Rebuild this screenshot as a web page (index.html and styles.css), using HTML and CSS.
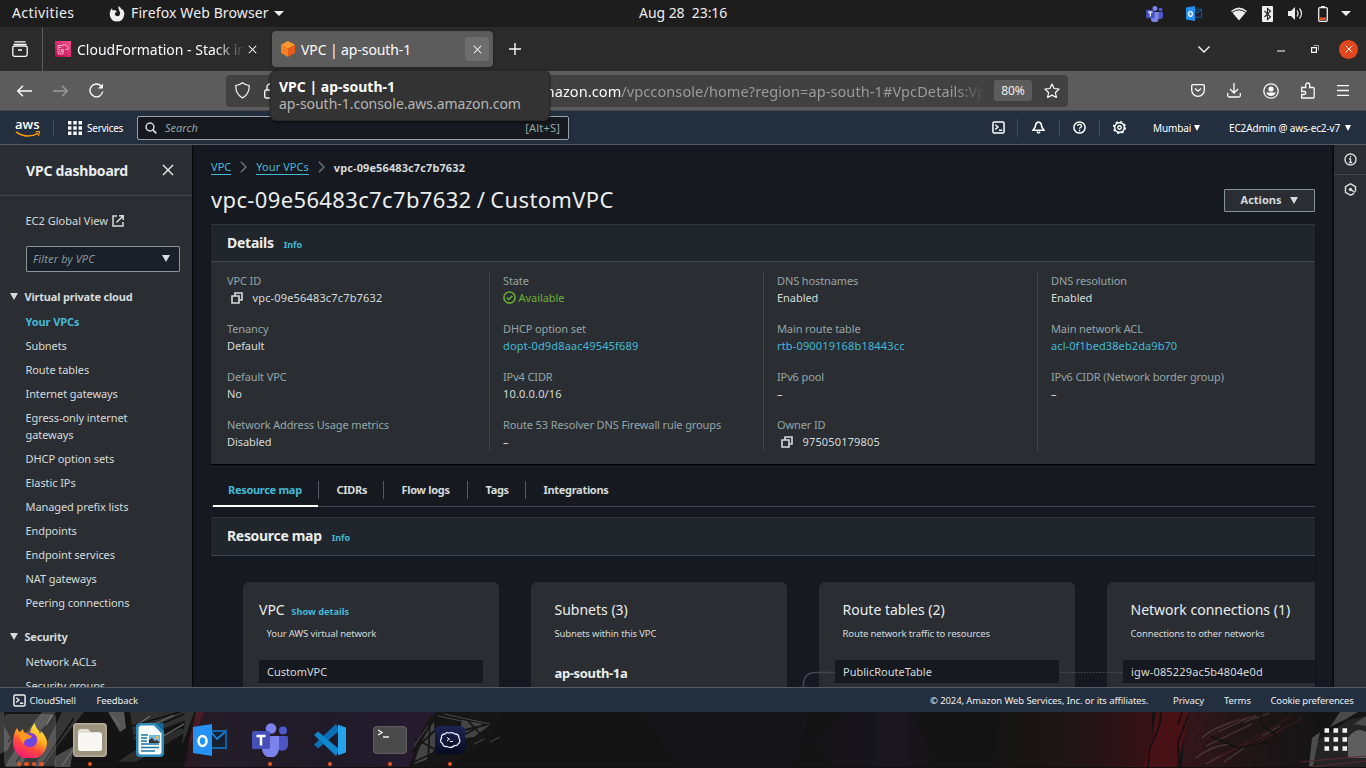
FILE: index.html
```html
<!DOCTYPE html>
<html lang="en">
<head>
<meta charset="utf-8">
<title>VPC | ap-south-1</title>
<link rel="stylesheet" href="styles.css">
</head>
<body>
<svg width="0" height="0" class="defs">
  <defs>
    <symbol id="teams" viewBox="0 0 36 34">
      <circle cx="31" cy="7.5" r="4" fill="#5059c9"/><path d="M25 13h9.500q1.500 0 1.500 1.500V22a6 6 0 0 1-9 5z" fill="#4e56c4"/>
      <circle cx="19" cy="5.500" r="5.300" fill="#7b83eb"/><path d="M10 13h17v13a8.500 8.500 0 0 1-17 0z" fill="#7b83eb"/>
      <rect x="0" y="8" width="18" height="18" rx="1.600" fill="#464eb8"/><path d="M4.500 13h9M9 13v9.500" stroke="#fff" stroke-width="2.500"/>
    </symbol>
    <symbol id="outlook" viewBox="0 0 34 32">
      <path d="M17 7h16v17H17z" fill="#17202e" stroke="#1464ac" stroke-width="1.800"/><path d="M18 8l6 7 8-7" fill="none" stroke="#1683dc" stroke-width="1.800"/>
      <path d="M0 3l19-3v32L0 29z" fill="#2492f4"/><ellipse cx="9.500" cy="17" rx="4" ry="5" fill="none" stroke="#fff" stroke-width="2.600"/>
    </symbol>
    <symbol id="copy" viewBox="0 0 12 12"><path d="M1 4h7v7H1z M4 4V1h7v7H8" fill="none" stroke="#d5dbdb" stroke-width="1.600"/></symbol>
    <symbol id="shell" viewBox="0 0 14 14"><rect x="1" y="1" width="12" height="12" rx="1.500" fill="none" stroke="currentColor" stroke-width="1.600"/><path d="M3.500 4l3 2.500-3 2.500M7.500 10h3.500" fill="none" stroke="currentColor" stroke-width="1.500"/></symbol>
    <symbol id="cross" viewBox="0 0 12 12"><path d="M1 1l10 10M11 1L1 11" fill="none" stroke="currentColor" stroke-width="1.400"/></symbol>
  </defs>
</svg>

<div class="topbar">
  <span class="activities">Activities</span>
  <svg class="ff-mono" width="16" height="16" viewBox="0 0 16 16"><path d="M3 2l.5 2.500Q5 3.500 6.500 4.500L8 5.500 6.500 6.500Q5 8 6.500 9.500 8.500 11 10.500 9.500 12 7.500 10.500 5 9 3 9.500 0 12 1.500 13 4l.7-1Q16 6.500 15 10A7.200 7.200 0 0 1 1 10Q0 6 3 2z" fill="#eee"/></svg>
  <span class="appname">Firefox Web Browser</span>
  <i class="caret"></i>
  <span class="clock">Aug 28&nbsp; 23:16</span>
  <div class="tray">
    <svg class="t-teams" width="17" height="16"><use href="#teams"/></svg>
    <svg class="t-out" width="16" height="15"><use href="#outlook"/></svg>
    <svg class="t-wifi" width="16" height="14" viewBox="0 0 16 14"><path d="M0 4Q8-3 16 4L8 13.500z" fill="#eee"/><path d="M1 4.300Q8-1 15 4.300" stroke="#1d1d1d" stroke-width="1" fill="none" transform="translate(0 1.200)"/></svg>
    <svg class="t-bt" width="11" height="16" viewBox="0 0 11 16"><rect width="11" height="16" rx="1" fill="#eee"/><path d="M2.500 5l6 6-3 2.500v-11l3 2.500-6 6" fill="none" stroke="#222" stroke-width="1.100"/></svg>
    <svg class="t-vol" width="15" height="13" viewBox="0 0 15 13"><path d="M0 4h3l4-4v13L3 9H0z" fill="#eee"/><path d="M9 3.500q2 3 0 6M11.500 1.500q4 5 0 10" fill="none" stroke="#ddd" stroke-width="1.300"/></svg>
    <svg class="t-bat" width="10" height="16" viewBox="0 0 10 16"><path d="M3 0h4v2H3z" fill="#eee"/><rect x=".7" y="1.700" width="8.600" height="13.600" rx="1" fill="none" stroke="#eee" stroke-width="1.300"/><path d="M2 11.500h6v2.500H2z" fill="#e95420"/></svg>
    <i class="caret"></i>
  </div>
</div>

<div class="tabbar">
  <div class="tabview"><svg width="16" height="16" viewBox="0 0 16 16" fill="none" stroke="#fbfbfe" stroke-width="1.300"><path d="M2.500.8h11M1.500 3.300h13"/><rect x=".8" y="5" width="14.400" height="10.300" rx="1.800"/><path d="M6 9h4" stroke-width="1.500"/></svg></div>
  <div class="tab tab-a">
    <svg width="16" height="16" viewBox="0 0 16 16"><defs><linearGradient id="cf" x1="0" y1="1" x2="1" y2="0"><stop stop-color="#b0084d"/><stop offset="1" stop-color="#ff4f8b"/></linearGradient></defs><path d="M0 0h16v16H0z" fill="url(#cf)"/><path d="M6.500 4.500H3v8.500h5v-2.500M4 6.500h2M4 8.700h1.500M4 11h2M6.500 8.500h1.800v2H6.500zM7 5.500q0-2 2-2t2.500 1.500q2 .3 2 1.800T12 8.500h-1.500" fill="none" stroke="#ffd6e6" stroke-width=".8"/></svg>
    <span class="tab-title fade">CloudFormation - Stack in</span>
    <svg class="x" width="9" height="9"><use href="#cross"/></svg>
  </div>
  <div class="tab tab-b">
    <svg width="14" height="16" viewBox="0 0 14 16"><path d="M7 0l7 3.800-7 3.900-7-3.900z" fill="#fa9a2e"/><path d="M0 3.800l7 3.900V16l-7-4z" fill="#f58220"/><path d="M14 3.800L7 7.700V16l7-4z" fill="#e65c1c"/></svg>
    <span class="tab-title">VPC | ap-south-1</span>
    <span class="xbox"><svg width="9" height="9"><use href="#cross"/></svg></span>
  </div>
  <svg class="plus" width="12" height="12" viewBox="0 0 12 12"><path d="M6 0v12M0 6h12" stroke="#fbfbfe" stroke-width="1.400"/></svg>
  <div class="winctl">
    <svg width="12" height="7" viewBox="0 0 12 7"><path d="M.5.500L6 6l5.500-5.500" fill="none" stroke="#fbfbfe" stroke-width="1.400"/></svg>
    <svg class="w-min" width="8" height="2"><path d="M0 1h8" stroke="#fff"/></svg>
    <svg class="w-max" width="8" height="8" viewBox="0 0 8 8"><path d="M.6 2.600h4.800v4.800H.6z" fill="none" stroke="#fff" stroke-width="1.200"/><path d="M2.500.500h5v5" fill="none" stroke="#aaa"/></svg>
    <span class="w-close"><svg width="8" height="8"><use href="#cross"/></svg></span>
  </div>
</div>

<div class="toolbar">
  <svg class="n-back" width="15" height="12" viewBox="0 0 15 12"><path d="M6 .7L.8 6 6 11.300M1 6h14" fill="none" stroke="#fbfbfe" stroke-width="1.400"/></svg>
  <svg class="n-fwd" width="15" height="12" viewBox="0 0 15 12"><path d="M9 .7L14.200 6 9 11.300M14 6H0" fill="none" stroke="#9b9b9b" stroke-width="1.400"/></svg>
  <svg class="n-rel" width="15" height="15" viewBox="0 0 15 15"><path d="M12 3A6.400 6.400 0 1 0 13.700 8.500" fill="none" stroke="#fbfbfe" stroke-width="1.400"/><path d="M14 .5v5H9z" fill="#fbfbfe"/></svg>
  <div class="urlbar">
    <svg class="u-shield" width="15" height="17" viewBox="0 0 15 17"><path d="M7.500.800Q10 3 14.200 3.500 14.500 12 7.500 16 .5 12 .8 3.500 5 3 7.500.800z" fill="none" stroke="#fbfbfe" stroke-width="1.200"/></svg>
    <svg class="u-lock" width="12" height="16" viewBox="0 0 12 16"><path d="M3 7V4a3 3 0 0 1 6 0v3" fill="none" stroke="#fbfbfe" stroke-width="1.300"/><rect x=".7" y="7" width="10.600" height="8" rx="1.500" fill="none" stroke="#fbfbfe" stroke-width="1.300"/></svg>
    <div class="url"><b>mazon.com</b><span>/vpcconsole/home?region=ap-south-1#VpcDetails:Vp</span></div>
    <span class="zoom">80%</span>
    <svg class="star" width="16" height="16" viewBox="0 0 16 16"><path d="M8 1l2.100 4.500 5 .6-3.700 3.400 1 5L8 12.100l-4.400 2.400 1-5L.9 6.100l5-.6z" fill="none" stroke="#fbfbfe" stroke-width="1.200" stroke-linejoin="round"/></svg>
  </div>
  <div class="exts">
    <svg width="14" height="13" viewBox="0 0 14 13" fill="none" stroke="#fbfbfe" stroke-width="1.300"><path d="M1.800.700h10.400q1.100 0 1.100 1.100V6a6.300 6.300 0 0 1-12.600 0V1.800Q.7.700 1.800.700zM4 4.500L7 7.200l3-2.700"/></svg>
    <svg width="14" height="15" viewBox="0 0 14 15" fill="none" stroke="#fbfbfe" stroke-width="1.300"><path d="M7 0v9.500M3 6l4 4 4-4M.7 10v2.500q0 1.500 1.500 1.500h9.600q1.500 0 1.500-1.500V10"/></svg>
    <svg width="16" height="16" viewBox="0 0 16 16"><circle cx="8" cy="8" r="7.200" fill="none" stroke="#fbfbfe" stroke-width="1.300"/><circle cx="8" cy="6" r="2.600" fill="#fbfbfe"/><path d="M3 9.500h10Q11 13 8 13T3 9.500z" fill="#fbfbfe"/></svg>
    <svg width="14" height="17" viewBox="0 0 14 17" fill="none" stroke="#fbfbfe" stroke-width="1.300"><path d="M.7 16V12.500h2.500q1.500 0 1.500-1.500T3.200 9.500H.7V5.500h4V3a2 2 0 0 1 4 0v2.500h3.500q1 0 1 1v8.500q0 1-1 1z"/></svg>
    <svg width="12" height="11" viewBox="0 0 12 11"><path d="M0 .7h12M0 5.500h12M0 10.300h12" stroke="#fbfbfe" stroke-width="1.300"/></svg>
  </div>
</div>

<div class="awsnav">
  <div class="logo"><span>aws</span><svg width="26" height="7" viewBox="0 0 26 7" fill="none" stroke="#ff9900"><path d="M1 .8Q12 8.500 23 2.300" stroke-width="1.500"/><path d="M20.500 1q4-1 4 0t-1.200 4" stroke-width="1.200"/></svg></div>
  <i class="sep s1"></i>
  <svg class="grid9" width="14" height="14" viewBox="0 0 14 14"><path d="M0 1.700h14M0 7h14M0 12.300h14" stroke="#fff" stroke-width="3.400" stroke-dasharray="3.400 1.900"/></svg>
  <span class="services">Services</span>
  <div class="search"><svg width="12" height="12" viewBox="0 0 12 12"><circle cx="5" cy="5" r="3.900" fill="none" stroke="#d5dbdb" stroke-width="1.500"/><path d="M7.800 7.800L11.300 11.300" stroke="#d5dbdb" stroke-width="1.800"/></svg><em>Search</em><span>[Alt+S]</span></div>
  <div class="navr">
    <svg class="a1" width="13" height="13"><use href="#shell"/></svg><i class="sep"></i>
    <svg class="a2" width="13" height="13" viewBox="0 0 13 13" fill="none" stroke="#fff" stroke-width="1.600"><path d="M6.500 1Q3.800 1.500 3.500 4.500L3 6.500 1 9.300h11L10 6.500l-.5-2Q9.200 1.500 6.500 1zM5 10.500q1.500 3 3 0"/></svg><i class="sep"></i>
    <svg class="a3" width="13" height="13" viewBox="0 0 13 13" fill="none" stroke="#fff" stroke-width="1.500"><circle cx="6.500" cy="6.500" r="5.600"/><path d="M4.500 5q.2-1.600 2-1.600t2 1.600q0 .9-1 1.500t-1 1.200M6.500 8.800v1.400" stroke-width="1.400"/></svg><i class="sep"></i>
    <svg class="a4" width="13" height="13" viewBox="0 0 13 13" fill="none" stroke="#fff"><circle cx="6.500" cy="6.500" r="4.800" stroke-width="1.500"/><circle cx="6.500" cy="6.500" r="5.900" stroke-width="1.300" stroke-dasharray="2.300 2.330"/><circle cx="6.500" cy="6.500" r="1.700" stroke-width="1.400"/></svg>
    <span class="region">Mumbai</span><i class="tri"></i><span class="acct">EC2Admin @ aws-ec2-v7</span><i class="tri"></i>
  </div>
</div>

<div class="page">
  <aside class="side">
    <div class="side-h"><b>VPC dashboard</b><svg width="12" height="12"><use href="#cross"/></svg></div>
    <div class="side-b">
      <div class="global">EC2 Global View <svg width="12" height="12" viewBox="0 0 12 12" fill="none" stroke="#d5dbdb" stroke-width="1.500"><path d="M5 1H1v10h10V7M7 .8h4.200V5M11 1L4.500 7.500"/></svg></div>
      <div class="filter"><em>Filter by VPC</em><i class="tri big"></i></div>
      <div class="sec"><i class="tri big"></i><b>Virtual private cloud</b></div>
      <ul>
        <li class="on">Your VPCs</li><li>Subnets</li><li>Route tables</li><li>Internet gateways</li><li>Egress-only internet<br>gateways</li><li>DHCP option sets</li><li>Elastic IPs</li><li>Managed prefix lists</li><li>Endpoints</li><li>Endpoint services</li><li>NAT gateways</li><li>Peering connections</li>
      </ul>
      <div class="sec two"><i class="tri big"></i><b>Security</b></div>
      <ul><li>Network ACLs</li><li>Security groups</li></ul>
    </div>
  </aside>

  <main class="main">
    <nav class="crumbs"><a class="c1">VPC</a><svg width="7" height="12" viewBox="0 0 7 12"><path d="M.8.800L6 6 .8 11.200" fill="none" stroke="#687078" stroke-width="1.500"/></svg><a class="c2">Your VPCs</a><svg width="7" height="12" viewBox="0 0 7 12"><path d="M.8.800L6 6 .8 11.200" fill="none" stroke="#687078" stroke-width="1.500"/></svg><b>vpc-09e56483c7c7b7632</b></nav>
    <div class="titlerow"><h1>vpc-09e56483c7c7b7632 / CustomVPC</h1><div class="actions"><b>Actions</b><i class="tri big"></i></div></div>
    <section class="panel">
      <header><h2>Details</h2><a>Info</a></header>
      <div class="cols">
        <dl><dt>VPC ID</dt><dd class="cp id"><svg width="12" height="12"><use href="#copy"/></svg>vpc-09e56483c7c7b7632</dd><dt>Tenancy</dt><dd>Default</dd><dt>Default VPC</dt><dd>No</dd><dt>Network Address Usage metrics</dt><dd>Disabled</dd></dl>
        <dl><dt>State</dt><dd class="ok"><svg width="13" height="13" viewBox="0 0 13 13" fill="none" stroke="#6aaf35" stroke-width="1.500"><circle cx="6.500" cy="6.500" r="5.600"/><path d="M3.800 6.500l2 2 3.700-3.700"/></svg>Available</dd><dt>DHCP option set</dt><dd class="lk id">dopt-0d9d8aac49545f689</dd><dt>IPv4 CIDR</dt><dd class="id">10.0.0.0/16</dd><dt>Route 53 Resolver DNS Firewall rule groups</dt><dd>–</dd></dl>
        <dl><dt>DNS hostnames</dt><dd>Enabled</dd><dt>Main route table</dt><dd class="lk id">rtb-090019168b18443cc</dd><dt>IPv6 pool</dt><dd>–</dd><dt>Owner ID</dt><dd class="cp id"><svg width="12" height="12"><use href="#copy"/></svg>975050179805</dd></dl>
        <dl><dt>DNS resolution</dt><dd>Enabled</dd><dt>Main network ACL</dt><dd class="lk id acl">acl-0f1bed38eb2da9b70</dd><dt>IPv6 CIDR (Network border group)</dt><dd>–</dd></dl>
      </div>
    </section>
    <div class="tabs"><b class="on">Resource map</b><b class="t2">CIDRs</b><b class="t3">Flow logs</b><b class="t4">Tags</b><b class="t5">Integrations</b></div>
    <section class="panel map">
      <header><h2>Resource map</h2><a>Info</a></header>
      <div class="cards">
        <div class="card first"><h3>VPC <a>Show details</a></h3><p>Your AWS virtual network</p><div class="res">CustomVPC</div></div>
        <div class="card"><h3>Subnets (3)</h3><p>Subnets within this VPC</p><b class="az">ap-south-1a</b></div>
        <div class="card"><h3>Route tables (2)</h3><p>Route network traffic to resources</p><div class="res">PublicRouteTable</div></div>
        <div class="card"><h3>Network connections (1)</h3><p>Connections to other networks</p><div class="res id">igw-085229ac5b4804e0d</div></div>
        <svg class="wires" width="330" height="110" viewBox="0 0 330 110" fill="none"><path d="M1.500 106V104Q1.500 91.500 14 91.500H33" stroke="#414750" stroke-width="1.600"/><path d="M258 91.500H321" stroke="#4a4f57" stroke-dasharray="1.500 1.500"/></svg>
      </div>
    </section>
  </main>

  <aside class="rail">
    <div><svg width="13" height="13" viewBox="0 0 13 13" fill="none" stroke="#d5dbdb" stroke-width="1.400"><circle cx="6.500" cy="6.500" r="5.500"/><path d="M6.500 3v1.500M5 6h1.500v3.500M4.800 9.500h3.400" stroke-width="1.300"/></svg></div>
    <div><svg width="13" height="13" viewBox="0 0 13 13" fill="none" stroke="#d5dbdb" stroke-width="1.500"><path d="M10 10.500L6.500 12.200 1.500 9.300V3.700L6.500.8l5 2.900V8.500M6.500 6.500l4.500 3"/><circle cx="6.500" cy="6.500" r="1" fill="#d5dbdb"/></svg></div>
  </aside>
</div>

<footer class="foot"><svg width="13" height="13"><use href="#shell"/></svg><span class="f1">CloudShell</span><span class="f2">Feedback</span><span class="f3">© 2024, Amazon Web Services, Inc. or its affiliates.</span><span class="f4">Privacy</span><span class="f5">Terms</span><span class="f6">Cookie preferences</span></footer>

<div class="dock">
  <svg class="wall" width="1366" height="56" viewBox="0 0 1366 56">
    <defs>
      <linearGradient id="pur"><stop stop-color="#2b1820"/><stop offset=".12" stop-color="#241d28"/><stop offset=".6" stop-color="#1f1a28"/><stop offset="1" stop-color="#281b31"/></linearGradient>
      <linearGradient id="red"><stop stop-color="#151414"/><stop offset=".45" stop-color="#1e1416"/><stop offset=".75" stop-color="#2a1216"/><stop offset="1" stop-color="#381015"/></linearGradient>
      <linearGradient id="blu"><stop stop-color="#151416"/><stop offset=".7" stop-color="#191620"/><stop offset="1" stop-color="#151414"/></linearGradient>
      <linearGradient id="str"><stop stop-color="#33151a"/><stop offset=".5" stop-color="#1e1517"/><stop offset="1" stop-color="#141414"/></linearGradient>
    </defs>
    <path d="M0 0h1366v56H0z" fill="#141414"/>
    <g fill="#3d3d3d"><path d="M0 0h4v14l8 14-4 10-8 4z"/><path d="M42 0h14L38 22 20 56H4l18-30z"/><path d="M62 0h22L56 36l-14 20h-8z" fill="#353535"/><path d="M108 0h16l2 16-6 4z" fill="#565656"/><path d="M130 0h60l-4 8-52 20z" fill="#303030"/><path d="M118 50l28-20 36-14 4 4-50 30z" fill="#2c2c2c"/><path d="M56 44l18-10-4 22H54z" fill="#4a4a4a"/><path d="M186 0h8l-12 34z" fill="#333"/></g>
    <g stroke="#6a6a6a" stroke-width="1.300" fill="none"><path d="M46 14L52 3M62 54L74 36M112 4l8 10M150 4l-14 10M174 3l-34 16M184 12l-38 22"/></g>
    <g stroke="#111" stroke-width="1.600" fill="none"><path d="M8 30L34 2M16 50L52 8M44 50l30-44M132 14l48-14M134 24l50-22M120 46l60-34"/></g>
    <path d="M196 0H436L408 56H184z" fill="url(#pur)"/><path d="M196 0h8l-8 22-8 12z" fill="#5b1c2b" opacity=".7"/>
    <path d="M436 0q-18 16-26 56h40l20-16 20-14 12-26z" fill="#161616"/>
    <path d="M434 10q-12 14-20 42l12-4 10-12zM462 8l28 5-16 12-16 2z" fill="#444"/>
    <g stroke="#161616" stroke-width="1.800" fill="none"><path d="M412 40l32-30M414 26l26 14M430 4l-2 52M414 50l30-14M456 20l34-8M456 27l30-16M464 4l18 20"/></g>
    <g stroke="#4a4a4a" fill="none"><path d="M438 4l28 6M444 2l46 10M428 14l-14 20M474 32l10-5M490 30l10-5"/></g>
    <path d="M640 0h170l-16 56H680z" fill="#151419"/><path d="M812 30l34-30h66l26 56h-100z" fill="url(#blu)"/>
    <path d="M1000 0h152v56h-160z" fill="url(#red)"/>
    <path d="M1186 0h124l20 56h-148z" fill="url(#str)"/>
    <path d="M1156 0h32l-3 22-8 34h-34l8-24z" fill="#541015" opacity=".8"/>
    <path d="M1148 56l2-20 10-24 1-12M1188 4l-10 26 1 24M1182 0l-4 12" fill="none" stroke="#180e10" stroke-width="1.600"/>
    <g fill="none" stroke="#45383b" stroke-width="1.300"><path d="M1202 26Q1216 12 1256 4M1206 34l46-22M1196 46q14-12 34-14M1224 50l20-14M1244 10l26-9M1218 20l30-14M1262 24l18-10M1206 52l16-9"/></g>
    <g fill="none" stroke="#431a21"><path d="M1190 28l18-26M1194 40q24-30 60-36M1212 50l80-46M1220 44l50-22M1252 34l50-28"/></g>
    <path d="M1210 24l28 12 30-6M1260 0l2 14 16 10" fill="none" stroke="#111" stroke-width="1.500"/>
    <path d="M1312 56q-4-24 16-34l20-14 18-4v52z" fill="#242424"/><path d="M1348 26q8-12 18-6v26h-18z" fill="#5e5e5e"/><path d="M1312 26l8-6-3 14-4 20h-4z" fill="#4c4c4c"/><path d="M1340 0h18l-12 7-16 8zM1354 12l12-8v10z" fill="#4a4a4a"/>
    <path d="M1300 50l66-6M1310 55l56-6" stroke="#5a2a31"/>
    <path d="M0 55.500h1366" stroke="#111"/>
  </svg>
  <div class="apps">
    <div class="app active"><svg width="36" height="36" viewBox="0 0 36 36"><defs><linearGradient id="fx" x1=".8" y1="0" x2=".3" y2="1"><stop stop-color="#fff04a"/><stop offset=".4" stop-color="#ffae1e"/><stop offset=".65" stop-color="#ff4a3b"/><stop offset="1" stop-color="#f0167d"/></linearGradient><radialGradient id="fp"><stop stop-color="#5150e8"/><stop offset="1" stop-color="#9238d4"/></radialGradient></defs><path d="M5 6q1 3 3 4l3-3q0 3 2 4 3 0 5 2Q18 6 23 1q0 4 4 8l1 3 1-3q6 6 6 12A17 17 0 0 1 1 20Q1 12 5 6z" fill="url(#fx)"/><circle cx="18" cy="18" r="7.300" fill="url(#fp)"/><path d="M6 11q6-3 11 2l3 1q-1 3-5 3-3 1-3 5-4-4-6-11z" fill="#ff961e"/></svg><span class="dots d4"><i></i><i></i><i></i><i></i></span></div>
    <div class="app"><svg width="34" height="34" viewBox="0 0 34 34"><rect x=".8" y=".8" width="32.400" height="32.400" rx="3" fill="#9d947f" stroke="#b6ae9c" stroke-width="1.500"/><path d="M5 9q0-3 3-3h7l3 3h8q3 0 3 3v13q0 3-3 3H8q-3 0-3-3z" fill="#e3dfd7"/><path d="M5 12q0-2 3-2h18q3 0 3 2v13q0 3-3 3H8q-3 0-3-3z" fill="#f8f7f4"/></svg><span class="dots"><i></i></span></div>
    <div class="app"><svg width="28" height="34" viewBox="0 0 28 34"><path d="M4 0h16l8 8v22q0 4-4 4H4q-4 0-4-4V4q0-4 4-4z" fill="#2c89b8"/><path d="M4.500 2.500H18l7.500 8V29q0 2.500-2.500 2.500H5Q2.500 31.500 2.500 29V4.500z" fill="#f9fcfd"/><path d="M20 0h7.500v8z" fill="#14658f"/><path d="M5 12h7M5 15h6M5 18h6M5 21h18M5 24.500h18M5 28h14" stroke="#1975a2" stroke-width="1.500"/><path d="M13 12h11v8H13z" fill="#71b6df"/><path d="M13 20v-3l3-2 3 3 2-1 3 3z" fill="#333"/><circle cx="21" cy="14.500" r="1.500" fill="#f7bd46"/></svg></div>
    <div class="app"><svg width="34" height="32"><use href="#outlook"/></svg></div>
    <div class="app"><svg width="36" height="34"><use href="#teams"/></svg><span class="dots"><i></i></span></div>
    <div class="app"><svg width="32" height="32" viewBox="0 0 32 32"><path d="M0 20.500L22 0l3 7L4 24.500z" fill="#0c6eb5"/><path d="M0 11l4-3.500L25 25l-3 7z" fill="#1186cf"/><path d="M22 0l10 3.500v25L22 32l2-1V1z" fill="#26a3ed"/></svg><span class="dots"><i></i></span></div>
    <div class="app"><svg width="34" height="28" viewBox="0 0 34 28"><rect x=".7" y=".7" width="32.600" height="26.600" rx="2.500" fill="#494949" stroke="#686868"/><path d="M5 4l4 2.500L5 9M10 11h6" fill="none" stroke="#eee" stroke-width="1.400"/></svg><span class="dots"><i></i></span></div>
    <div class="app"><svg width="30" height="28" viewBox="0 0 30 28"><defs><linearGradient id="tm" x2="0" y2="1"><stop stop-color="#1b2454"/><stop offset="1" stop-color="#070b20"/></linearGradient></defs><rect width="30" height="28" rx="5" fill="url(#tm)"/><path d="M10 8q1-2 4-1 3-1 6 1 4 0 4 4 2 4-1 6-1 2-3.500 1.500Q16 23 12 20.500 8 21 7.500 17.500 4 15.500 6.500 12 6 8 10 8z" fill="none" stroke="#e6ecf5" stroke-width="1.300"/><path d="M12 11.500l2.500 1.700-2.500 1.700M15 15.500h3" fill="none" stroke="#fff"/></svg><span class="dots"><i></i></span></div>
  </div>
  <svg class="launcher" width="24" height="24" viewBox="0 0 24 24"><path d="M.5 2.500h23M.5 11.500h23M.5 20.500h23" stroke="#f2f2f2" stroke-width="4.400" stroke-dasharray="4.600 4.400"/></svg>
</div>

<div class="tip"><b>VPC | ap-south-1</b><span>ap-south-1.console.aws.amazon.com</span></div>
</body>
</html>
```
FILE: styles.css
```css
* { box-sizing: border-box; }
body { margin: 0; width: 1366px; height: 768px; overflow: hidden; display: flex; flex-direction: column; background: #16191f; color: #d5dbdb; font-family: "Noto Sans", sans-serif; font-size: 11px; white-space: nowrap; position: relative; }
svg { display: block; flex: none; }
i { font-style: normal; }
b { letter-spacing: -.2px; }
.defs { position: absolute; }
h1, h2, h3, p, ul, dl, dt, dd { margin: 0; padding: 0; }
.caret { border: 5px solid transparent; border-top-color: #eee; border-bottom: 0; flex: none; }
.tri { border: 3.5px solid transparent; border-top: 6px solid #fff; border-bottom: 0; flex: none; }
.tri.big { border-width: 7px 4.500px 0; border-top-color: #d5dbdb; }

.topbar { height: 27px; flex: none; background: #1d1d1d; display: flex; align-items: center; padding-left: 12px; color: #eee; font-size: 14px; position: relative; }
.topbar > span { margin-top: -2px; }
.activities { width: 97px; letter-spacing: .4px; }
.ff-mono { margin-right: 6px; }
.appname { width: 143px; letter-spacing: .12px; }
.topbar > .clock { margin-left: 355px; width: 507px; letter-spacing: -.05px; }
.tray { display: flex; align-items: center; }
.t-teams { margin-right: 23px; }
.t-out { margin-right: 29px; }
.t-wifi { margin-right: 15px; }
.t-bt { margin-right: 15px; }
.t-vol { margin-right: 15px; }
.t-bat { margin-right: 13px; }

.tabbar { height: 44px; flex: none; background: #2b2b2b; display: flex; align-items: center; color: #fbfbfe; font-size: 14px; }
.tabview { width: 43px; height: 44px; border-right: 1px solid #5c5c5c; display: flex; align-items: center; padding-left: 12px; }
.tab { display: flex; align-items: center; }
.tab-a { width: 229px; padding-left: 12px; }
.tab-a .tab-title { margin-left: 6px; width: 168px; overflow: hidden; }
.fade { -webkit-mask-image: linear-gradient(90deg, #000 138px, transparent 168px); mask-image: linear-gradient(90deg, #000 138px, transparent 168px); }
.x { margin-left: 3px; }
.tab-b { width: 221px; height: 36px; background: #5c5c5c; border-radius: 4px; padding-left: 9px; box-shadow: 0 0 3px #1118; }
.tab-b .tab-title { margin-left: 6px; width: 164px; letter-spacing: -.1px; }
.xbox { width: 24px; height: 24px; background: #6d6d6d; border-radius: 4px; display: grid; place-items: center; }
.plus { margin-left: 16px; }
.winctl { margin-left: auto; display: flex; align-items: center; padding-right: 8px; }
.w-min { margin: 4px 26px 0 67px; }
.w-max { margin-right: 20px; }
.w-close { width: 19px; height: 19px; border-radius: 50%; background: #e2481d; display: grid; place-items: center; }

.toolbar { height: 40px; flex: none; background: #5c5c5c; border-bottom: 1px solid #484848; display: flex; align-items: center; padding-left: 17px; }
.n-fwd { margin-left: 21px; }
.n-rel { margin-left: 21px; }
.urlbar { margin-left: 122px; width: 842px; height: 32px; border-radius: 4px; background: #414141; display: flex; align-items: center; padding-left: 9px; }
.u-lock { margin-left: 14px; }
.url { margin-left: 265px; width: 448px; font-size: 14.500px; color: #9b9b9b; overflow: hidden; -webkit-mask-image: linear-gradient(90deg, #000 415px, transparent 444px); mask-image: linear-gradient(90deg, #000 415px, transparent 444px); }
.url span { letter-spacing: .1px; }
.url b { font-weight: 400; color: #fbfbfe; letter-spacing: .1px; }
.zoom { width: 38px; height: 21px; margin-left: 5px; background: #5c5c5c; border-radius: 3px; color: #eee; font-size: 12px; line-height: 21px; text-align: center; }
.star { margin-left: 12px; }
.exts { display: flex; align-items: center; margin-left: 123px; gap: 22px; }

.awsnav { height: 34px; flex: none; background: #232f3e; border-bottom: 1px solid #545b64; display: flex; align-items: center; padding-left: 15px; color: #fff; font-size: 10px; }
.logo { width: 38px; display: flex; flex-direction: column; }
.logo span { font: 600 13px/11px "Open Sans", sans-serif; margin-top: 1px; }
.logo svg { margin-top: 1px; }
.sep { width: 1px; height: 18px; background: #414d5c; flex: none; }
.grid9 { margin-left: 14px; }
.services { margin-left: 5px; width: 50px; letter-spacing: -.25px; }
.search { width: 432px; height: 24px; border: 1px solid #95a5a6; border-radius: 2px; background: #16191f; display: flex; align-items: center; padding: 0 8px 0 7px; color: #95a5a6; font-size: 11px; }
.search em { margin-left: 8px; flex: 1; }
.search span { letter-spacing: .2px; }
.navr { display: flex; align-items: center; margin-left: 423px; }
.a1 { margin-right: 12px; }
.a2 { margin: 0 14px; }
.a3 { margin: 0 13px; }
.a4 { margin-left: 13px; }
.region { margin-left: 27px; width: 41px; letter-spacing: -.1px; }
.acct { margin-left: 29px; width: 116px; letter-spacing: -.15px; }

.page { height: 542px; flex: none; display: flex; overflow: hidden; }
.side { width: 192px; height: 100%; overflow: hidden; background: #2a2e33; box-shadow: 1px 0 2px #000; flex: none; }
.side-h { height: 51px; border-bottom: 1px solid #414750; display: flex; align-items: center; justify-content: space-between; padding: 0 18px 0 26px; font-size: 14px; color: #eaeded; }
.side-b { padding-top: 16px; }
.global { height: 17px; line-height: 17px; margin-left: 25.500px; display: flex; align-items: center; gap: 4px; }
.filter { margin: 17px 12px 0 26px; height: 26px; border: 1px solid #879596; border-radius: 1px; background: #1a2029; display: flex; align-items: center; justify-content: space-between; padding: 0 9px 2px 6px; color: #879596; letter-spacing: .12px; }
.sec { display: flex; align-items: center; height: 17px; margin: 16px 0 0 10px; gap: 6.500px; font-size: 11px; }
.sec.two { margin-top: 17px; }
.side ul { list-style: none; padding-top: 8px; }
.side li { line-height: 17px; margin: 0 0 7px 25.500px; letter-spacing: -.08px; }
.side li.on { color: #44b9d6; font-weight: 700; letter-spacing: -.1px; }

.main { width: 1142px; padding: 14px 19px 0 19px; overflow: hidden; flex: none; }
.crumbs { height: 16px; display: flex; align-items: center; }
.crumbs a { color: #44b9d6; border-bottom: 1px solid #44b9d6; line-height: 15px; letter-spacing: .05px; }
.crumbs svg { margin: 0 9px; }
.crumbs b { letter-spacing: .1px; }
.titlerow { display: flex; align-items: center; justify-content: space-between; height: 24px; margin-top: 12px; }
h1 { font-size: 22px; font-weight: 400; color: #eaeded; letter-spacing: .36px; word-spacing: -1px; }
.actions { width: 91px; height: 23px; margin-top: 2px; border: 1px solid #879596; border-radius: 1px; background: #2a2e33; display: flex; align-items: center; justify-content: center; gap: 9px; }
.actions b { letter-spacing: 0; margin-top: -1px; }
.panel { margin-top: 13px; width: 1104px; height: 240px; background: #2a2e33; box-shadow: 0 1px 1px #000; border-top: 1px solid #30353b; }
.panel header { height: 37px; background: #21252c; border-bottom: 1px solid #414750; display: flex; align-items: center; padding-left: 16px; gap: 10px; }
h2 { font-size: 14px; font-weight: 700; color: #eaeded; line-height: 20px; letter-spacing: -.25px; }
.panel header a { color: #44b9d6; font-weight: 700; font-size: 9px; margin-top: 3px; }
.cols { display: flex; padding-top: 10px; }
dl { width: 274px; height: 179px; padding: 0 0 0 13px; border-left: 1px solid #414750; line-height: 17px; }
dl:first-child { width: 278px; padding-left: 16px; border: 0; }
dt { color: #95a5a6; letter-spacing: -.12px; }
dd { height: 17px; margin-bottom: 14px; letter-spacing: -.05px; }
dd.lk { color: #44b9d6; }
dd.id { letter-spacing: .16px; }
dd.acl { letter-spacing: .09px; }
.cp { display: flex; align-items: center; padding-left: 3.500px; gap: 10px; }
.ok { display: flex; align-items: center; gap: 3px; margin-left: -.500px; color: #6aaf35; }
.tabs { display: flex; height: 33px; margin-top: 10px; padding: 7px 0 0 2px; border-bottom: 1px solid #414750; line-height: 17px; }
.tabs b { border-left: 1px solid #545b64; height: 18px; padding-left: 17.500px; letter-spacing: -.3px; }
.tabs .on { width: 105px; height: 26px; border: 0; border-bottom: 2px solid #fff; padding-left: 15px; color: #44b9d6; }
.t2 { width: 65px; } .t3 { width: 84px; } .t4 { width: 58px; }
.map { margin-top: 10px; background: #16191f; overflow: hidden; box-shadow: 0 0 1px #000; }
.map header { height: 38px; padding-bottom: 2px; }
.map h2 { letter-spacing: -.32px; }
.cards { display: flex; gap: 32px; padding: 26px 0 0 32px; width: 1200px; position: relative; }
.card { width: 256px; height: 150px; border-radius: 6px; background: #2a2e33; padding: 18px 16px 0; flex: none; }
h3 { font-size: 14px; font-weight: 400; color: #eaeded; height: 20px; line-height: 20px; padding-left: 7.500px; }
.card.first h3 { padding-left: 0; }
h3 a { color: #44b9d6; font-size: 9.200px; font-weight: 700; margin-left: 3px; }
.card p { font-size: 9.500px; line-height: 14px; padding-left: 7.500px; margin-top: 7px; letter-spacing: -.13px; }
.res { margin-top: 19px; height: 23px; line-height: 23px; background: #16191f; padding-left: 8px; }
.res.id { letter-spacing: .16px; }
.az { display: block; font-size: 13px; line-height: 20px; padding-left: 7.500px; margin-top: 22px; color: #eaeded; letter-spacing: -.35px; }
.wires { position: absolute; left: 591px; top: 25px; }
.rail { width: 32px; background: #2a2e33; box-shadow: -1px 0 2px #000; flex: none; }
.rail div { height: 29px; display: grid; place-items: center; }
.rail div + div { border-top: 1px solid #414750; height: 30px; }

.foot { height: 25px; flex: none; background: #232f3e; border-top: 1px solid #545b64; display: flex; align-items: center; padding-left: 13px; font-size: 9.500px; color: #eee; letter-spacing: -.1px; }
.f1 { margin-left: 3.500px; width: 67px; }
.f2 { width: 833.500px; }
.f3 { width: 243px; } .f4 { width: 51px; } .f5 { width: 46.500px; }
.f6 { letter-spacing: -.15px; }

.dock { height: 56px; flex: none; position: relative; overflow: hidden; background: #141414; display: flex; align-items: center; }
.wall { position: absolute; left: 0; top: 0; }
.apps { display: flex; gap: 8px; padding-left: 4px; position: relative; height: 56px; padding-top: 2px; }
.app { width: 52px; height: 52px; border-radius: 4px; display: grid; place-items: center; position: relative; }
.active { background: #ffffff2b; }
.dots { position: absolute; bottom: 0; left: 0; width: 52px; display: flex; justify-content: center; gap: 3px; }
.dots i { width: 4.500px; height: 4.500px; border-radius: 50%; background: #e95420; }
.launcher { position: relative; margin-left: 848px; }

.tip { position: absolute; left: 270px; top: 70px; width: 280px; height: 51px; border-radius: 6px; background: #333; border: 1px solid #292929; box-shadow: 0 1px 3px #0009; display: flex; flex-direction: column; padding: 7px 0 0 8px; line-height: 17px; font-size: 14px; color: #fff; }
.tip b { letter-spacing: 0; }
.tip span { color: #b6b6b6; letter-spacing: -.03px; }
```
